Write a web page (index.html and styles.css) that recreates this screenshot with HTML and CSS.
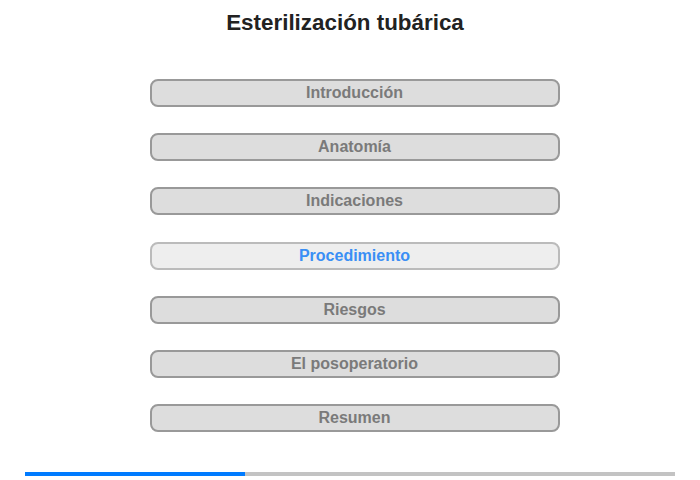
FILE: index.html
```html
<!DOCTYPE html>
<html lang="es">
<head>
<meta charset="utf-8">
<title>Esterilización tubárica</title>
<link rel="stylesheet" href="styles.css">
</head>
<body>
<div class="page">
  <h1 class="title">Esterilización tubárica</h1>
  <nav class="menu">
    <div class="item">Introducción</div>
    <div class="item">Anatomía</div>
    <div class="item">Indicaciones</div>
    <div class="item active">Procedimiento</div>
    <div class="item">Riesgos</div>
    <div class="item">El posoperatorio</div>
    <div class="item">Resumen</div>
  </nav>
  <div class="progress"><div class="progress-fill" style="width: 220px"></div></div>
</div>
</body>
</html>
```
FILE: styles.css
```css
html, body {
  margin: 0;
  padding: 0;
  background: #fff;
}
.page {
  width: 700px;
  height: 480px;
  display: flex;
  flex-direction: column;
  align-items: center;
  font-family: "Liberation Sans", Arial, sans-serif;
}
.title {
  margin: 10px 10px 0 0;
  font-size: 22.4px;
  line-height: 26px;
  font-weight: bold;
  color: #222;
}
.menu {
  margin: 43px 0 0 9px;
  display: flex;
  flex-direction: column;
  gap: 26.2px;
}
.item {
  box-sizing: border-box;
  width: 410px;
  height: 28px;
  border: 2px solid #999;
  border-radius: 8px;
  background: #ddd;
  color: #7a7a7a;
  font-size: 16px;
  font-weight: bold;
  line-height: 24px;
  text-align: center;
}
.item.active {
  border-color: #bbb;
  background: #eee;
  color: #3a8ff5;
}
.progress {
  margin-top: auto;
  margin-bottom: 4px;
  width: 650px;
  height: 4px;
  background: #c3c3c3;
}
.progress-fill {
  height: 100%;
  background: #007bff;
}
```
